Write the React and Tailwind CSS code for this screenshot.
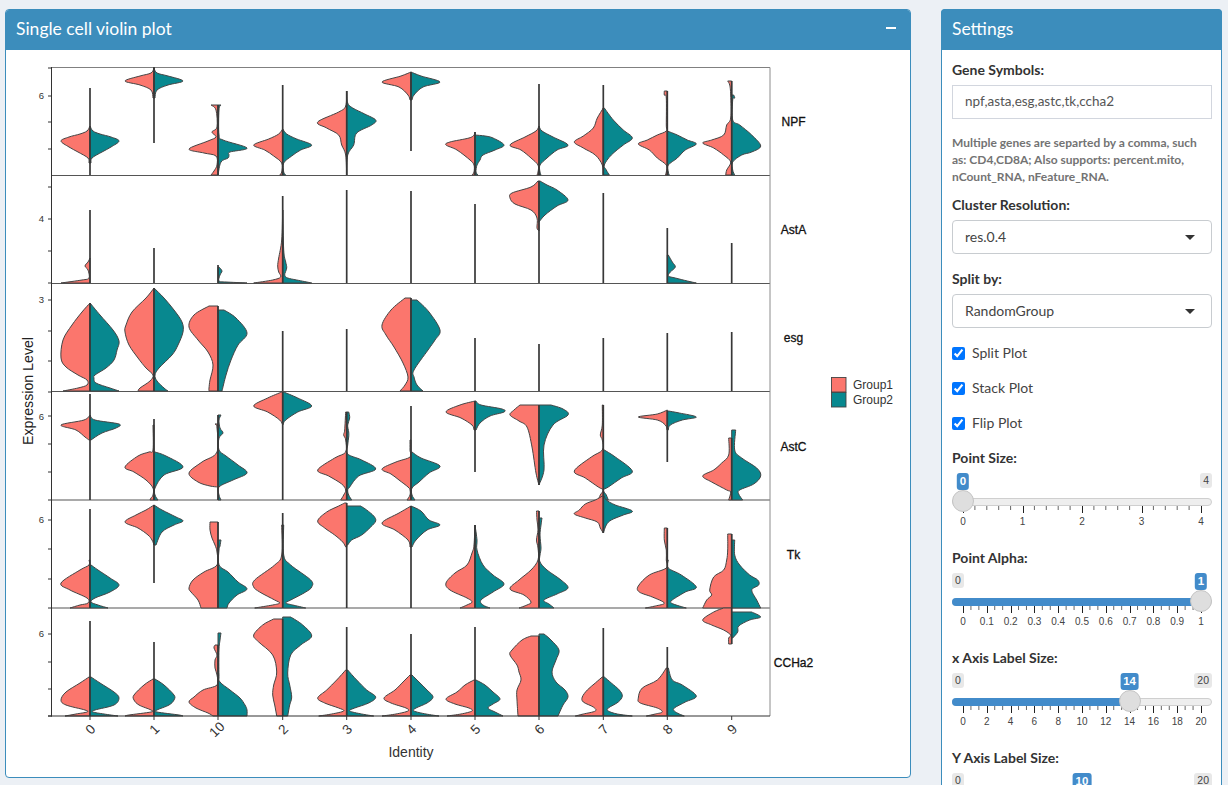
import React from "react";

const SALMON = "#fb766d";
const TEAL = "#08888f";
const LINE = "#444444";
const C = [90, 154, 218, 282.7, 346.7, 411, 475, 539, 603.3, 667.3, 731.7];
const LABELS = ["0", "1", "10", "2", "3", "4", "5", "6", "7", "8", "9"];

// each violin: [column, spineTop, spineBottom, leftProfile, rightProfile], profile = [y, halfWidth] pairs
const V = [
  // NPF
  [0, 88, 175, [[126,0],[131,3],[134,10],[137,21],[141,29],[147,21],[152,12],[158,2],[163,1]], [[126,0],[131,3],[134,10],[137,21],[141,29],[147,21],[152,12],[158,2],[163,1]]],
  [1, 67, 143, [[68,0],[73,3],[76,14],[81,29],[85,14],[90,3],[98,1]], [[68,0],[73,3],[76,14],[81,29],[85,14],[90,3],[98,1]]],
  [2, 105, 175, [[105,7],[110,2],[127,1],[132,6],[137,2],[141,10],[149,29],[153,14],[156,2],[165,1],[171,4],[175,7]], [[105,3],[110,1],[135,1],[140,5],[148,29],[152,12],[155,11],[158,10],[162,3],[175,0]]],
  [3, 85, 175, [[129,0],[134,4],[139,14],[145,29],[150,18],[156,9],[163,1],[172,1],[175,3]], [[129,0],[134,4],[139,14],[145,29],[150,18],[156,9],[163,1],[172,1],[175,3]]],
  [4, 91, 175, [[91,0],[106,1],[112,8],[122,29],[128,20],[135,8],[145,5],[155,1],[175,0]], [[91,0],[103,1],[108,6],[114,18],[120,29],[125,25],[133,10],[145,7],[155,1],[175,0]]],
  [5, 72, 151, [[72,0],[76,10],[82,29],[87,12],[95,3],[100,1]], [[72,0],[76,10],[82,29],[87,12],[95,3],[100,1]]],
  [6, 132, 175, [[132,0],[135,1],[138,6],[142,25],[145,29],[150,18],[160,5],[165,1],[172,1],[175,3]], [[135,0],[136,10],[138,18],[145,29],[150,20],[155,8],[160,5],[165,2],[172,1],[175,3]]],
  [7, 84, 175, [[126,0],[131,3],[137,14],[145,29],[150,18],[158,8],[165,1],[172,1],[175,2]], [[126,0],[131,3],[137,14],[145,29],[150,18],[158,8],[165,1],[172,1],[175,2]]],
  [8, 85, 175, [[108,0],[118,6],[128,10],[136,20],[142,29],[148,20],[155,8],[165,1],[175,0]], [[108,1],[120,10],[130,20],[138,29],[145,20],[155,8],[165,1],[170,3],[175,6]]],
  [9, 91, 175, [[91,3],[95,3],[98,1],[125,1],[131,1],[135,10],[140,20],[144,29],[150,18],[158,10],[165,1],[172,1],[175,2]], [[131,0],[135,10],[140,20],[144,29],[150,18],[158,10],[165,1],[172,1],[175,2]]],
  [10, 81, 175, [[81,4],[85,2],[95,1],[118,1],[125,5],[135,8],[140,20],[143,29],[148,18],[155,8],[162,1],[170,5],[175,6]], [[95,2],[98,3],[100,1],[120,1],[125,8],[135,20],[146,29],[152,20],[155,10],[162,1],[170,1],[175,3]]],
  // AstA
  [0, 210, 283, [[258,0],[262,2],[266,5],[270,2],[278,1],[280,8],[283,29]], null],
  [1, 248, 283, null, null],
  [2, 265, 283, null, [[267,1],[271,4],[275,2],[281,1],[282,8],[283,29]]],
  [3, 196, 283, [[210,0],[240,1],[258,4],[266,5],[272,4],[277,2],[280,10],[283,29]], [[210,0],[250,1],[262,3],[268,4],[275,2],[278,5],[280,14],[283,29]]],
  [4, 190, 283, null, null],
  [5, 191, 283, null, null],
  [6, 204, 283, null, null],
  [7, 181, 283, [[181,1],[187,8],[193,27],[198,29],[204,24],[210,8],[218,2],[228,2],[231,0]], [[181,1],[185,8],[190,18],[200,29],[206,18],[215,6],[222,0]]],
  [8, 193, 283, null, null],
  [9, 228, 283, null, [[255,1],[262,5],[267,8],[272,3],[276,1],[278,8],[281,20],[283,29]]],
  [10, 243, 283, null, null],
  // esg
  [0, 303, 391, [[303,0],[312,8],[325,18],[340,27],[358,29],[367,24],[375,12],[380,3],[385,3],[388,12],[391,27]], [[303,0],[315,10],[330,23],[341,29],[350,27],[360,24],[368,16],[375,5],[378,4],[383,6],[388,20],[391,29]]],
  [1, 288, 391, [[288,0],[298,8],[312,22],[325,28],[332,29],[345,25],[358,16],[368,8],[375,1],[381,4],[388,14],[391,16]], [[288,0],[298,10],[310,20],[322,28],[332,29],[345,24],[355,18],[368,5],[375,1],[381,3],[388,10],[391,14]]],
  [2, 306, 391, [[306,9],[315,24],[327,29],[340,20],[352,10],[365,5],[380,8],[388,9],[391,9]], [[310,6],[318,18],[333,29],[345,20],[360,13],[375,8],[391,4]]],
  [3, 331, 391, null, null],
  [4, 329, 391, null, null],
  [5, 298, 391, [[298,6],[310,20],[325,29],[335,25],[347,17],[363,8],[377,3],[385,6],[391,11]], [[300,6],[312,18],[330,29],[340,24],[350,17],[370,3],[377,3],[385,6],[391,12]]],
  [6, 338, 391, null, null],
  [7, 344, 391, null, null],
  [8, 338, 391, null, null],
  [9, 333, 391, null, null],
  [10, 332, 391, null, null],
  // AstC
  [0, 394, 500, [[415,0],[420,6],[425,29],[430,14],[437,5],[440,1]], [[415,0],[420,5],[424,29],[428,26],[433,12],[440,1]]],
  [1, 419, 500, [[425,1],[450,1],[452,5],[456,16],[467,29],[472,20],[480,8],[488,1],[495,1],[498,3],[500,4]], [[452,1],[456,12],[467,29],[475,10],[488,1],[495,1],[500,4]]],
  [2, 415, 500, [[424,3],[428,1],[452,1],[462,16],[473,29],[482,20],[486,8],[487,0]], [[415,3],[420,1],[428,2],[433,5],[438,1],[450,1],[456,8],[465,20],[473,29],[480,15],[487,1],[495,1],[500,3]]],
  [3, 392, 500, [[392,1],[398,15],[406,29],[412,15],[420,3],[425,0]], [[392,1],[398,15],[406,29],[412,15],[420,3],[425,0]]],
  [4, 412, 500, [[412,1],[430,2],[435,3],[440,1],[452,1],[458,12],[470,29],[476,18],[484,5],[490,1],[495,3],[500,6]], [[412,2],[418,3],[425,1],[432,2],[437,2],[445,1],[454,1],[460,15],[469,29],[476,12],[487,3],[490,1],[495,2],[500,5]]],
  [5, 406, 500, [[440,1],[450,1],[457,1],[462,15],[469,29],[474,20],[480,12],[487,3],[490,1],[495,1],[500,4]], [[452,1],[458,10],[466,29],[473,18],[482,8],[488,1],[495,1],[500,4]]],
  [6, 401, 472, [[401,0],[405,15],[412,29],[418,14],[425,3],[430,1]], [[401,1],[405,6],[409,27],[412,29],[416,15],[423,5],[430,1]]],
  [7, 405, 485, [[405,19],[410,25],[415,29],[421,20],[427,12],[447,7],[473,3],[485,0]], [[405,12],[409,24],[415,29],[425,14],[445,5],[470,5],[485,0]]],
  [8, 405, 500, [[405,1],[425,1],[435,3],[440,1],[450,1],[457,12],[471,29],[478,18],[487,5],[490,0],[495,3],[500,5]], [[450,1],[457,12],[471,29],[478,18],[487,5],[490,0],[495,3],[500,5]]],
  [9, 411, 462, [[410,0],[414,10],[417,29],[420,10],[425,2],[430,0]], [[411,1],[413,12],[417,29],[420,15],[425,3],[430,1]]],
  [10, 438, 500, [[438,3],[455,3],[463,10],[470,18],[476,29],[482,20],[490,5],[492,1],[500,3]], [[430,4],[450,3],[458,10],[468,25],[476,29],[484,22],[490,8],[494,7],[500,11]]],
  // Tk
  [0, 509, 608, [[560,1],[565,1],[570,10],[583,29],[590,20],[598,3],[603,2],[605,10],[608,20]], [[565,1],[570,8],[578,20],[585,29],[592,20],[598,5],[602,1],[605,8],[608,18]]],
  [1, 505, 583, [[505,0],[510,8],[515,18],[522,29],[528,16],[535,6],[540,2],[545,0]], [[505,0],[510,8],[517,22],[521,29],[525,20],[532,8],[545,2]]],
  [2, 522, 608, [[522,8],[530,8],[538,6],[545,3],[552,1],[565,1],[572,14],[580,25],[588,29],[592,27],[600,20],[608,17]], [[540,3],[546,2],[550,1],[565,1],[572,10],[582,20],[589,29],[595,19],[603,11],[608,9]]],
  [3, 513, 608, [[525,1],[555,1],[565,8],[580,28],[587,29],[592,23],[600,8],[603,3],[605,10],[608,28]], [[525,1],[555,1],[565,8],[580,28],[587,29],[592,23],[600,8],[603,3],[605,10],[608,23]]],
  [4, 503, 608, [[503,2],[506,8],[512,20],[521,29],[528,22],[535,12],[542,4],[547,1]], [[506,14],[510,20],[516,27],[521,29],[527,24],[535,15],[540,5],[545,1]]],
  [5, 506, 608, [[506,0],[513,12],[523,29],[530,16],[540,3],[547,1]], [[506,0],[511,10],[520,18],[525,29],[530,16],[540,5],[547,1]]],
  [6, 525, 608, [[525,0],[545,1],[553,3],[565,8],[573,20],[583,29],[590,25],[598,8],[602,3],[605,8],[608,15]], [[525,0],[540,2],[550,2],[565,8],[575,18],[584,29],[592,18],[600,6],[605,8],[608,15]]],
  [7, 511, 608, [[511,2.5],[520,2],[530,1],[540,2.5],[548,1],[560,1],[570,8],[580,20],[589,29],[595,15],[602,8],[605,12],[608,20]], [[518,3],[525,2],[535,1],[548,2],[555,1],[562,1],[570,8],[580,22],[588,29],[594,18],[600,5],[604,10],[608,15]]],
  [8, 496, 533, [[496,1],[500,8],[504,18],[510,24],[514,29],[518,18],[522,6],[528,3],[533,0]], [[496,1],[500,3],[505,12],[511,29],[515,20],[520,8],[525,3],[533,0]]],
  [9, 528, 608, [[528,3],[540,3],[550,1],[560,1],[568,1],[575,18],[586,29],[592,28],[597,15],[603,3],[606,12],[608,22]], [[560,1],[568,1],[575,14],[587,29],[592,18],[600,5],[603,4],[606,12],[608,19]]],
  [10, 534, 608, [[534,4],[550,4],[560,5],[570,8],[577,18],[590,22],[595,20],[600,25],[608,29]], [[540,3],[555,3],[565,8],[575,18],[580,26],[585,27],[590,20],[600,25],[608,29]]],
  // CCHa2
  [0, 621, 716, [[677,1],[683,10],[692,24],[700,29],[705,24],[710,5],[712,3],[714,14],[716,25]], [[677,1],[683,10],[692,24],[698,29],[705,24],[710,5],[712,3],[714,14],[716,28]]],
  [1, 642, 716, [[679,1],[685,10],[695,20],[700,20],[705,15],[710,3],[712,3],[715,25],[716,29]], [[679,1],[685,10],[695,20],[700,20],[705,15],[710,3],[712,3],[715,25],[716,29]]],
  [2, 645, 716, [[645,3],[648,4],[655,1],[660,3],[668,3],[675,1],[685,1],[690,15],[697,24],[702,29],[708,22],[713,10],[716,5]], [[633,3],[640,2],[650,1],[675,1],[682,2],[690,12],[698,22],[705,27],[710,29],[716,29]]],
  [3, 619, 716, [[619,9],[625,20],[635,29],[642,24],[655,10],[672,6],[685,9],[695,10],[705,8],[716,6]], [[617,8],[625,20],[636,29],[645,18],[655,8],[673,5],[685,7],[697,9],[705,7],[716,5]]],
  [4, 627, 716, [[670,1],[680,10],[690,20],[698,29],[703,22],[708,8],[711,3],[714,15],[716,28]], [[670,1],[680,10],[690,20],[697,29],[703,22],[708,8],[711,3],[714,15],[716,27]]],
  [5, 634, 716, [[675,1],[682,8],[690,16],[698,27],[703,20],[708,5],[711,3],[714,15],[716,29]], [[675,1],[682,8],[690,16],[697,22],[703,16],[708,5],[711,3],[714,15],[716,28]]],
  [6, 627, 716, [[680,1],[685,10],[692,18],[699,29],[704,20],[708,6],[711,3],[714,14],[716,28]], [[680,1],[685,10],[692,18],[699,25],[704,18],[708,13],[712,20],[716,28]]],
  [7, 636, 716, [[636,8],[640,17],[650,27],[655,29],[665,22],[672,20],[680,18],[690,22],[700,22],[716,21]], [[634,5],[640,12],[650,20],[660,17],[672,13],[682,17],[690,26],[697,29],[705,24],[716,19]]],
  [8, 628, 716, [[677,1],[683,8],[690,16],[697,21],[702,20],[707,10],[711,8],[714,20],[716,28]], [[677,1],[683,8],[690,16],[696,19],[702,15],[708,5],[711,5],[714,14],[716,29]]],
  [9, 647, 716, [[668,1],[680,10],[688,25],[698,29],[703,27],[708,10],[712,5],[714,12],[716,21]], [[668,1],[680,5],[685,15],[696,29],[702,18],[708,7],[711,7],[714,12],[716,17]]],
  [10, 608, 644, [[608,8],[612,18],[620,29],[625,20],[630,8],[635,1],[638,3],[644,3]], [[612,20],[617,29],[620,18],[626,7],[632,6],[638,1]]],
];

function curve(c, sign, pts) {
  const p = pts.map(([y, w]) => [c + sign * w, y]);
  let d = `M${c} ${p[0][1]}L${p[0][0]} ${p[0][1]}`;
  for (let i = 0; i < p.length - 1; i++) {
    const a = p[Math.max(0, i - 1)], b = p[i], e = p[i + 1], f = p[Math.min(p.length - 1, i + 2)];
    const c1x = b[0] + (e[0] - a[0]) / 6, c1y = b[1] + (e[1] - a[1]) / 6;
    const c2x = e[0] - (f[0] - b[0]) / 6, c2y = e[1] - (f[1] - b[1]) / 6;
    d += `C${c1x.toFixed(1)} ${c1y.toFixed(1)} ${c2x.toFixed(1)} ${c2y.toFixed(1)} ${e[0].toFixed(1)} ${e[1]}`;
  }
  return d + `L${c} ${p[p.length - 1][1]}Z`;
}

const FONT = '"Liberation Sans", Arial, sans-serif';
const ROWS = [67.5, 175.5, 283.5, 391.5, 500, 608, 716];
const TICKS = [68,96,122,149,187,219,251,283,300,331,361,392,416,444,472,500,520,549,579,608,634,662,689,716];
const YLABELS = [[96,"6"],[219,"4"],[300,"3"],[417,"6"],[520,"6"],[634,"6"]];
const STRIPS = [[122,"NPF"],[230,"AstA"],[338,"esg"],[447,"AstC"],[555,"Tk"],[663,"CCHa2"]];

function Plot() {
  return (
    <svg viewBox="6 50 904 727" className="block w-[904px] h-[727px]" style={{ fontFamily: FONT }}>
      <rect x="52" y="67.5" width="718" height="648.5" fill="#fff" />
      {ROWS.slice(1, -1).map((y) => (
        <line key={y} x1="52" x2="770" y1={y} y2={y} stroke="#555" strokeWidth="1.2" />
      ))}
      <line x1="52" x2="770" y1="67.5" y2="67.5" stroke="#808080" strokeWidth="1" />
      <line x1="770" x2="770" y1="67.5" y2="716" stroke="#8c8c8c" strokeWidth="1" />
      {V.map(([i, top, bot, l, r], k) => (
        <g key={k} stroke={LINE} strokeWidth="1" strokeLinejoin="round">
          {l && <path d={curve(C[i], -1, l)} fill={SALMON} />}
          {r && <path d={curve(C[i], 1, r)} fill={TEAL} />}
          <line x1={C[i]} x2={C[i]} y1={top} y2={bot} stroke="#383838" strokeWidth="1.7" />
        </g>
      ))}
      <line x1="51.5" x2="51.5" y1="67" y2="716.5" stroke="#333" strokeWidth="1" />
      <line x1="48" x2="770" y1="716" y2="716" stroke="#333" strokeWidth="1.2" />
      {TICKS.map((y) => (
        <line key={y} x1="48" x2="52" y1={y} y2={y} stroke="#333" strokeWidth="1" />
      ))}
      {YLABELS.map(([y, t]) => (
        <text key={y} x="44" y={y + 3} textAnchor="end" fontSize="9.5" fill="#333">{t}</text>
      ))}
      {C.map((x, i) => (
        <g key={i}>
          <line x1={x} x2={x} y1="716" y2="720" stroke="#333" strokeWidth="1" />
          <text transform={`translate(${x + (LABELS[i].length > 1 ? -1 : 0.5)} 729.5) rotate(-45)`} textAnchor="middle" dominantBaseline="central" fontSize="13.5" fill="#333">
            {LABELS[i]}
          </text>
        </g>
      ))}
      {STRIPS.map(([y, t]) => (
        <text key={t} x="793.5" y={y + 4} textAnchor="middle" fontSize="12" fill="#111" stroke="#111" strokeWidth="0.3">{t}</text>
      ))}
      <text x="411" y="757" textAnchor="middle" fontSize="14" fill="#333">Identity</text>
      <text transform="translate(33 391) rotate(-90)" textAnchor="middle" fontSize="14.2" fill="#222">Expression Level</text>
      <rect x="831.5" y="377.5" width="14.5" height="14.5" fill={SALMON} stroke="#444" strokeWidth="0.9" />
      <rect x="831.5" y="392.5" width="14.5" height="14.5" fill={TEAL} stroke="#444" strokeWidth="0.9" />
      <text x="853" y="389" fontSize="12" fill="#333">Group1</text>
      <text x="853" y="404" fontSize="12" fill="#333">Group2</text>
    </svg>
  );
}

function Slider({ label, min, max, value, labels, minors }) {
  const pct = (value - min) / (max - min);
  const span = 238;
  const hx = 11 + span * pct;
  const n = labels.length - 1;
  const step = span / n;
  const small = [];
  for (let i = 0; i < n; i++) for (let j = 1; j <= minors; j++) small.push(11 + step * i + (step * j) / (minors + 1));
  return (
    <div className="h-[100px]">
      <div className="font-bold text-[14px] leading-[20px] text-[#333] mb-[5px]">{label}</div>
      <div className="relative h-[70px] w-[260px]" style={{ fontFamily: FONT }}>
        {pct > 0 && <span className="absolute left-0 top-0 h-[15px] px-[3px] rounded-[3px] bg-[#e8e8e8] text-[10.5px] leading-[15px] text-[#444]">{min}</span>}
        {pct < 1 && <span className="absolute right-0 top-0 h-[15px] px-[3px] rounded-[3px] bg-[#e8e8e8] text-[10.5px] leading-[15px] text-[#444]">{max}</span>}
        <span
          className="absolute top-0 h-[17px] px-[3px] rounded-[3px] bg-[#428bca] text-white font-bold text-[11.5px] leading-[17px] -translate-x-1/2"
          style={{ left: hx }}
        >
          {value}
        </span>
        <div className="absolute left-0 right-0 top-[25px] h-[8px] rounded-full border border-[#cfcfcf] bg-[#eeeeee]" />
        {pct > 0 && <div className="absolute left-0 top-[25px] h-[8px] rounded-l-full bg-[#428bca]" style={{ width: hx }} />}
        <svg className="absolute left-0 top-[33px]" width="260" height="8">
          {small.map((x, i) => (
            <line key={i} x1={x} x2={x} y1="0" y2="4" stroke="#666" strokeWidth="1" />
          ))}
          {labels.map((_, i) => (
            <line key={i} x1={Math.round(11 + step * i) + 0.5} x2={Math.round(11 + step * i) + 0.5} y1="0" y2="7" stroke="#222" strokeWidth="1" />
          ))}
        </svg>
        {labels.map((t, i) => (
          <span key={i} className="absolute top-[43px] text-[10px] leading-[12px] text-[#444] -translate-x-1/2" style={{ left: 11 + step * i }}>
            {t}
          </span>
        ))}
        <div
          className="absolute top-[17px] w-[22px] h-[22px] rounded-full bg-[#dedede] border border-[#c4c4c4] -translate-x-1/2"
          style={{ left: hx }}
        />
      </div>
    </div>
  );
}

function SelectBox({ value }) {
  return (
    <div className="h-[34px] mt-[5px] rounded-[4px] border border-[#c8ccd0] bg-white flex items-center justify-between pl-[12px] pr-[16px] text-[14px] text-[#444]">
      <span className="pb-[2px]">{value}</span>
      <span className="w-0 h-0 border-x-[5px] border-x-transparent border-t-[5px] border-t-[#333]" />
    </div>
  );
}

function Check({ label }) {
  return (
    <label className="flex items-center h-[20px] gap-[7px] text-[14px] text-[#444]">
      <input type="checkbox" defaultChecked className="w-[13px] h-[13px] m-0" />
      <span className="pb-[2px]">{label}</span>
    </label>
  );
}

function Header({ title, children }) {
  return (
    <div className="h-[41px] bg-[#3c8dbc] flex items-center justify-between pl-[11px] pr-[15px] rounded-t-[4px] -mx-px -mt-px">
      <span className="text-[17.5px] text-white leading-none pb-[1px]">{title}</span>
      {children}
    </div>
  );
}

const range = (n, f) => Array.from({ length: n }, (_, i) => f(i));

export default function App() {
  return (
    <div
      className="h-[785px] w-[1228px] overflow-hidden bg-[#ecf0f5] flex items-start gap-[30px] pl-[5px] pt-[9px]"
      style={{ fontFamily: 'Lato, "Noto Sans", sans-serif' }}
    >
      <div className="w-[906px] h-[769px] bg-white border border-[#3c8dbc] rounded-[4px] overflow-hidden shrink-0">
        <Header title="Single cell violin plot">
          <span className="w-[10px] h-[2px] bg-white mb-[4px]" />
        </Header>
        <Plot />
      </div>
      <div className="w-[281px] h-[900px] bg-white border border-[#3c8dbc] rounded-t-[4px] shrink-0">
        <Header title="Settings" />
        <div className="pl-[10px] pr-[9px] pt-[10px]">
          <div className="font-bold text-[14px] leading-[20px] text-[#333]">Gene Symbols:</div>
          <div className="h-[34px] mt-[5px] border border-[#d2d6de] flex items-center pl-[12px] pb-[2px] text-[13.5px] text-[#555]">
            npf,asta,esg,astc,tk,ccha2
          </div>
          <p className="mt-[15px] text-[12px] leading-[17px] font-bold text-[#737373] whitespace-nowrap">
            Multiple genes are separted by a comma, such<br />
            as: CD4,CD8A; Also supports: percent.mito,<br />
            nCount_RNA, nFeature_RNA.
          </p>
          <div className="mt-[10px] font-bold text-[14px] leading-[20px] text-[#333]">Cluster Resolution:</div>
          <SelectBox value="res.0.4" />
          <div className="mt-[15px] font-bold text-[14px] leading-[20px] text-[#333]">Split by:</div>
          <SelectBox value="RandomGroup" />
          <div className="mt-[15px] flex flex-col gap-[15px]">
            <Check label="Split Plot" />
            <Check label="Stack Plot" />
            <Check label="Flip Plot" />
          </div>
          <div className="mt-[15px]">
            <Slider label="Point Size:" min={0} max={4} value={0} minors={4} labels={["0", "1", "2", "3", "4"]} />
            <Slider label="Point Alpha:" min={0} max={1} value={1} minors={2} labels={["0", "0.1", "0.2", "0.3", "0.4", "0.5", "0.6", "0.7", "0.8", "0.9", "1"]} />
            <Slider label="x Axis Label Size:" min={0} max={20} value={14} minors={2} labels={range(11, (i) => String(i * 2))} />
            <Slider label="Y Axis Label Size:" min={0} max={20} value={10} minors={2} labels={range(11, (i) => String(i * 2))} />
          </div>
        </div>
      </div>
    </div>
  );
}
